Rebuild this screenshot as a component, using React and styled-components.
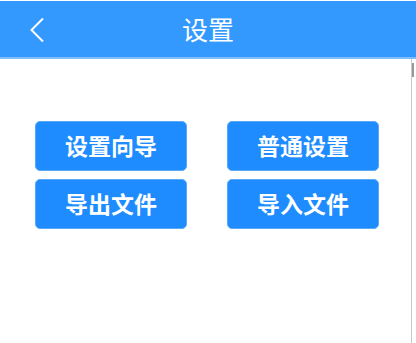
import React from "react";
import styled, { createGlobalStyle } from "styled-components";

const GlobalStyle = createGlobalStyle`
  html, body {
    margin: 0;
    padding: 0;
    background: #fff;
    font-family: "Noto Sans CJK SC", "Noto Sans", sans-serif;
  }
`;

const items = ["设置向导", "普通设置", "导出文件", "导入文件"];

const App = () => {
  return (
    <>
      <GlobalStyle />
      <Page>
        <Header>
          <Back>
            <svg width="16" height="26" viewBox="0 0 16 26">
              <path
                d="M14 1.5 L2.5 13 L14 24.5"
                fill="none"
                stroke="#fff"
                strokeWidth="2"
              />
            </svg>
          </Back>
          <Title>设置</Title>
          <span />
        </Header>
        <Main>
          <Body>
            <Grid>
              {items.map((t) => (
                <Button key={t}>{t}</Button>
              ))}
            </Grid>
          </Body>
          <ScrollTrack>
            <Thumb />
          </ScrollTrack>
        </Main>
      </Page>
    </>
  );
};

export default App;

const Page = styled.div`
  width: 416px;
  height: 343px;
  overflow: hidden;
  display: flex;
  flex-direction: column;
`;

const Header = styled.div`
  margin-top: 1px;
  height: 56px;
  background-color: #3399ff;
  border-bottom: 2px solid #7dbdfb;
  display: grid;
  grid-template-columns: 1fr auto 1fr;
  align-items: center;
`;

const Back = styled.div`
  display: flex;
  padding-left: 29px;
  padding-top: 2px;
`;

const Title = styled.h1`
  margin: 0;
  color: #fff;
  font-size: 26px;
  font-weight: 400;
  line-height: 1;
`;

const Main = styled.div`
  flex: 1;
  display: flex;
`;

const Body = styled.div`
  flex: 1;
  padding: 62px 0 0 35px;
`;

const Grid = styled.div`
  display: grid;
  grid-template-columns: 152px 152px;
  column-gap: 40px;
  row-gap: 8px;
`;

const Button = styled.button`
  height: 50px;
  border: 1px solid #5aa9f5;
  border-radius: 5px;
  background-color: #1e8cff;
  color: #fff;
  font-family: "Noto Sans CJK SC", "Noto Sans", sans-serif;
  font-size: 23px;
  font-weight: 700;
  line-height: 1;
  padding: 0 0 2px;
  cursor: pointer;
`;

const ScrollTrack = styled.div`
  width: 3px;
  margin-right: 1px;
  border-left: 1px solid #c8c8c8;
  padding-top: 4px;
`;

const Thumb = styled.div`
  width: 2px;
  height: 14px;
  background-color: #999;
`;
